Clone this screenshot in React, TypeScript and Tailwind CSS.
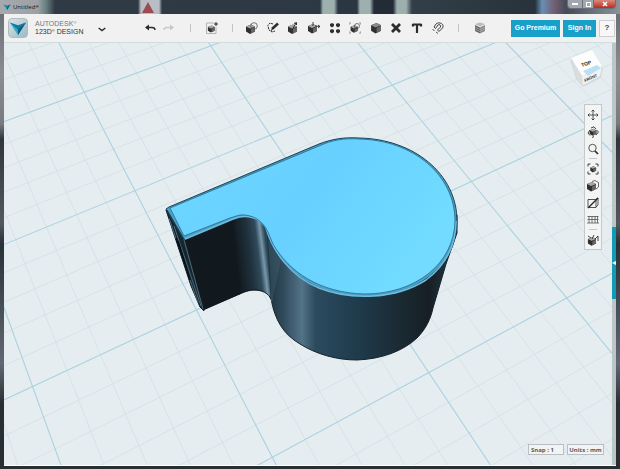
import type { ReactNode } from "react";

type Pt = [number, number];

// Ground plane: one square of two major cells on each side, seen in perspective.
const Q: Pt[] = [[135, 190.7], [392.3, 85], [566.7, 298], [272.3, 457.3]];

function project(u: number, v: number): Pt {
  const [p0, p1, p2, p3] = Q;
  const s = u / 2;
  const t = (v - 1) / 2;
  const dx1 = p1[0] - p2[0], dx2 = p3[0] - p2[0];
  const dy1 = p1[1] - p2[1], dy2 = p3[1] - p2[1];
  const sx = p0[0] - p1[0] + p2[0] - p3[0];
  const sy = p0[1] - p1[1] + p2[1] - p3[1];
  const det = dx1 * dy2 - dx2 * dy1;
  const g = (sx * dy2 - dx2 * sy) / det;
  const h = (dx1 * sy - sx * dy1) / det;
  const w = g * s + h * t + 1;
  return [
    ((p1[0] - p0[0] + g * p1[0]) * s + (p3[0] - p0[0] + h * p3[0]) * t + p0[0]) / w,
    ((p1[1] - p0[1] + g * p1[1]) * s + (p3[1] - p0[1] + h * p3[1]) * t + p0[1]) / w,
  ];
}

function GridLines() {
  const minor: string[] = [];
  const major: string[] = [];
  for (let i = -15; i <= 25; i++) {
    const k = i / 5;
    const [a, b] = [project(k, -1.6), project(k, 5)];
    const [c, d] = [project(-2.4, k), project(5, k)];
    const out = i % 5 === 0 ? major : minor;
    out.push(`M${a}L${b}`);
    if (k >= -1.6) out.push(`M${c}L${d}`);
  }
  return (
    <g fill="none">
      <path d={minor.join("")} stroke="#d3dfe3" strokeWidth="0.8" />
      <path d={major.join("")} stroke="#abd2e1" strokeWidth="1.1" />
    </g>
  );
}

function Scene() {
  return (
    <svg className="absolute inset-0 h-full w-full" viewBox="4 43 608 422" preserveAspectRatio="xMidYMid slice" role="img" aria-label="Solid model on the work plane">
      <defs>
        <linearGradient id="side" gradientUnits="userSpaceOnUse" x1="268" y1="0" x2="457" y2="0">
          <stop offset="0" stopColor="#20323e" />
          <stop offset="0.08" stopColor="#304a5b" />
          <stop offset="0.18" stopColor="#547387" />
          <stop offset="0.25" stopColor="#2d4b5e" />
          <stop offset="0.42" stopColor="#213f51" />
          <stop offset="0.66" stopColor="#1b2d37" />
          <stop offset="0.85" stopColor="#161f24" />
          <stop offset="1" stopColor="#253d4a" />
        </linearGradient>
        <linearGradient id="bend" gradientUnits="userSpaceOnUse" x1="232" y1="225" x2="273" y2="220">
          <stop offset="0" stopColor="#12191f" />
          <stop offset="0.35" stopColor="#20323e" />
          <stop offset="0.55" stopColor="#304b5c" />
          <stop offset="0.66" stopColor="#7898aa" />
          <stop offset="0.76" stopColor="#2c4758" />
          <stop offset="1" stopColor="#374f5d" />
        </linearGradient>
        <linearGradient id="face" x1="0" y1="0" x2="1" y2="0.4">
          <stop offset="0" stopColor="#6ed6ff" />
          <stop offset="0.55" stopColor="#67d0ff" />
          <stop offset="1" stopColor="#72dbff" />
        </linearGradient>
      </defs>
      <rect x="-400" y="-400" width="1600" height="1400" fill="#e5edf0" />
      <GridLines />
      <path d="M267 228L271 299C275 320 283 334 300 344C316 354 336 360 357 360C382 359 403 351 417 338C426 329 431 318 433 308L446 264L457 233V215Z" fill="url(#side)" stroke="#14222b" strokeWidth="1" />
      <path d="M230 219L238 295C246 291 253 289 260 291C267 292 270 296 272 303L283 250L267 222L248 214Z" fill="url(#bend)" />
      <path d="M184 237L233 218L240 294L203 310Z" fill="#11191f" />
      <path d="M166 210L184 237L204 311L200 307L191 286Z" fill="#17252e" stroke="#14212a" strokeWidth="1" />
      <path d="M169 218L198 303M174 226L201 306M184 240L203 309" fill="none" stroke="#577b8c" strokeWidth="0.8" />
      <path d="M176 238L189 276M178 241L190 280" fill="none" stroke="#061015" strokeWidth="1.6" />
      <path d="M203 310L242 293C253 288 266 289 271 299" fill="none" stroke="#0b151b" strokeWidth="1" />
      <path d="M267 228L271 299" fill="none" stroke="#172b37" strokeWidth="0.7" />
      <path d="M166 209L169 207L319 144C332 139 344 137 359 138C414 139 457 174 457 221C457 267 415 297 364 297C318 296 283 272 270 241L266 228C262 220 252 215 242 217C238 218 235 219 232 220L184 240Z" fill="#4d9fc3" stroke="#194256" strokeWidth="1" strokeLinejoin="round" />
      <path d="M185 239L233 219C246 214 260 217 266 228C273 252 291 277 319 288C352 301 396 299 426 280C446 265 456 245 456 221" fill="none" stroke="#6bbde2" strokeWidth="1.500" />
      <path d="M170 208L319 146C332 140 344 138 359 139C413 140 455 175 455 221C454 265 414 294 365 294C320 293 289 272 273 244L268 232C263 221 253 214 240 215C236 216 233 217 230 218L184 236Z" fill="url(#face)" stroke="#286b8b" strokeWidth="0.8" />
      <path d="M167 210L184 239" stroke="#183b4b" strokeWidth="1" />
      <g>
        <path d="M570 60L591 51L603 68L601 78L583 87L576 79Z" fill="#c8ced2" opacity="0.6" />
        <path d="M571 58L592 50L602 66L582 76Z" fill="#fdfdfd" />
        <path d="M571 58L582 76L583 85L577 79Z" fill="#dadde0" />
        <path d="M582 76L602 66L600 76L583 85Z" fill="#f2f2f2" />
        <path d="M583 71L597 65L601 68L588 76Z" fill="#b9e0f3" />
        <text x="582" y="67" transform="rotate(-20 582 67)" fontFamily="Liberation Sans, sans-serif" fontWeight="bold" fontSize="5" fill="#252525">TOP</text>
        <text x="585" y="82" transform="rotate(-24 585 82)" fontFamily="Liberation Sans, sans-serif" fontWeight="bold" fontSize="4" fill="#333">FRONT</text>
      </g>
    </svg>
  );
}

function Icon({ children, className = "size-3" }: { children: ReactNode; className?: string }) {
  return (
    <svg viewBox="0 0 12 12" className={className} fill="none" stroke="#2c2c2c" strokeWidth="1" aria-hidden="true">
      {children}
    </svg>
  );
}

function Cube({ x = 0, y = 0, soft = false }: { x?: number; y?: number; soft?: boolean }) {
  return (
    <g transform={`translate(${x} ${y})`} stroke="none">
      <path d="M0 2L5 0L9 2V7L4 9.500L0 7Z" fill="#303030" />
      <path d="M0 2L5 0L9 2L4 4Z" fill={soft ? "#8a8a8a" : "#a8a8a8"} />
      <path d="M5 4.500L9 2.500V7L5 9Z" fill="#666" />
    </g>
  );
}

const icons = {
  insert: <><path d="M8 1H.5V11.500H10V5" stroke="#999" strokeWidth=".7" /><g transform="scale(.75)"><Cube x={2.5} y={4.5} /></g><path d="M10 0V4M8 2H12" /></>,
  primitives: <><Cube x={0} y={2.5} /><circle cx="8" cy="4" r="3.300" stroke="#555" strokeWidth=".8" /></>,
  sketch: <><path d="M6 2L3 1L.8 3.500L2 8L5 10L8 9" strokeDasharray="2 .7" /><path d="M5 7L11 1.500" strokeWidth="2.500" /><path d="M4 9L5.500 6.500" /></>,
  construct: <><Cube x={1} y={2.5} /><path d="M6 6L9 1M7 1.500L9.500 .5V3" /></>,
  modify: <><Cube x={0} y={2} /><path d="M5 4V0M7 4L12 4.500M10 3L12 4.500L10 6" strokeWidth=".9" /></>,
  pattern: <g fill="#303030" stroke="none"><path d="M1 2L3 1L5 2V4L3 5.500L1 4ZM7 2L9 1L11 2V4L9 5.500L7 4ZM1 8L3 7L5 8V10L3 11.500L1 10ZM7 8L9 7L11 8V10L9 11.500L7 10Z" /></g>,
  grouping: <><g transform="scale(.8)"><Cube x={2} y={4} /></g><circle cx="8" cy="4" r="2.500" strokeWidth=".6" /><path d="M0 3V1H2M10 1H12V3M0 9V11H2M10 11H12V9" stroke="#777" strokeWidth=".7" /></>,
  combine: <g transform="scale(1.1)"><Cube x={1} y={1} soft /></g>,
  erase: <path d="M2 2L10 10M10 2L2 10" strokeWidth="2.800" />,
  text: <path d="M1.500 2.500H10.500M6 2V11M2 2V4.500M10 2V4.500" strokeWidth="2.200" />,
  magnet: <><path d="M2 5L4 2C7-.8 13 2 10.500 6L7 9.500L5.500 8L8.500 5C9.500 3 7 2 6 3L3.500 6.500Z" strokeWidth=".9" /><path d="M.5 7L2.500 9M4 10L6 11.500" strokeWidth=".8" /></>,
  material: <g stroke="none"><path d="M1 2L6 4.500L11 2L6 .5Z" fill="#bbb" /><path d="M1 3L6 5.500V11.500L1 9Z" fill="#666" /><path d="M11 3L6 5.500V11.500L11 9Z" fill="#858585" /><path d="M1 5L6 7.500L11 5M1 7L6 9.500L11 7" fill="none" stroke="#ccc" strokeWidth=".5" /></g>,
  pan: <><path d="M6 1V11M1 6H11" strokeWidth=".8" /><path d="M4.500 2.500L6 1L7.500 2.500M4.500 9.500L6 11L7.500 9.500M2.500 4.500L1 6L2.500 7.500M9.500 4.500L11 6L9.500 7.500" strokeWidth=".8" /></>,
  orbit: <><g transform="scale(.75)"><Cube x={3.5} y={3.5} /></g><path d="M3 9.500L1 7L3 4M4 2L7 .8L9 3M9.500 4L11.500 6L9 9M7 10.500L5 11.500" strokeWidth=".9" /></>,
  zoom: <><circle cx="5.500" cy="5" r="3.700" strokeWidth=".8" /><path d="M8 8L11 11" strokeWidth="1.700" /></>,
  fit: <><g transform="scale(.65)"><Cube x={5} y={5} /></g><path d="M1 3.500V1H3.500M8.500 1H11V3.500M1 8.500V11H3.500M8.500 11H11V8.500" strokeWidth=".9" /></>,
  shading: <><Cube x={0} y={2} /><path d="M5 1.500L8 .5L11.500 2.500V7L9 9" strokeWidth=".7" /></>,
  hide: <><path d="M1 2.500H9V10.500H1ZM9 2L11 1V8L9 10" strokeWidth=".8" /><path d="M1 11L11 1" strokeWidth="1.500" /></>,
  gridToggle: <><path d="M.5 2.500H11.500M.5 5.500H11.500M0 9H12M2 2V9M5 2V9M8 2V9M10.500 2V9" stroke="#555" strokeWidth=".8" /></>,
  snap: <><g transform="scale(.9)"><Cube x={1} y={3.5} /></g><path d="M1 2L4 4M5 5L7 1M8 5L11 2V7" strokeWidth=".9" /></>,
};

type IconName = keyof typeof icons;

function ToolButton({ name, label }: { name: IconName; label: string }) {
  return (
    <button type="button" aria-label={label} className="flex h-[17px] min-w-0 flex-1 items-center justify-center">
      <Icon>{icons[name]}</Icon>
    </button>
  );
}

const tools: [IconName, string][] = [
  ["primitives", "Primitives"], ["sketch", "Sketch"], ["construct", "Construct"], ["modify", "Modify"], ["pattern", "Pattern"],
  ["grouping", "Grouping"], ["combine", "Combine"], ["erase", "Delete"], ["text", "Text"], ["magnet", "Snap"],
];

const navGroups: [IconName, string][][] = [
  [["pan", "Pan"], ["orbit", "Orbit"], ["zoom", "Zoom"]],
  [["fit", "Fit"], ["shading", "Shading"], ["hide", "Hide"], ["gridToggle", "Toggle grid"]],
  [["snap", "Snap options"]],
];

function Divider() {
  return <span className="h-2 w-px shrink-0 bg-[#c4c4c4]" />;
}

function Logo({ className }: { className: string }) {
  return (
    <svg viewBox="0 0 20 20" className={className} aria-hidden="true">
      <path d="M1 4L10 8V18Z" fill="#2fabc9" />
      <path d="M19 4L10 8V18Z" fill="#075a80" />
      <path d="M1 4L10 7L19 4L10 12Z" fill="#0f7ba2" />
    </svg>
  );
}

function TitleBar() {
  return (
    <div className="flex h-[14px] shrink-0 items-start bg-[linear-gradient(90deg,#a6a9ad_0,#9da1a5_38px,#668080_46px,#303a45_55px,#303a45_138px,#b9bdc5_141px,#b9bdc5_159px,#303a45_162px,#2c3844_320px,#9eb0ae_323px,#9eb0ae_334px,#2b3643_338px,#2b3643_357px,#9eb0ae_360px,#9eb0ae_370px,#232c36_374px,#232c36_393px,#9eb0ae_397px,#9eb0ae_406px,#333f48_412px,#27323a_535px,#6990b3_542px,#715d70_555px,#454c57_566px,#8d9498_100%)]">
      <div className="flex h-[13px] flex-1 items-center gap-[2px] pl-[3px]">
        <Logo className="size-2" />
        <span className="w-[126px] font-['Open_Sans','Noto_Sans',sans-serif] text-[6px] leading-[10px] text-[#181818]">Untitled*</span>
        <svg viewBox="0 0 14 12" className="h-3 w-[14px]" aria-hidden="true"><path d="M7 1L13 12H1Z" fill="#9b4b52" /></svg>
      </div>
      <div className="mr-1 flex h-[9px] overflow-hidden rounded-b-sm border border-t-0 border-[#68717a] text-white">
        <button type="button" aria-label="Minimize" className="flex w-[14px] items-center justify-center bg-[#a1a7ae]"><span className="h-[2px] w-[6px] bg-white" /></button>
        <button type="button" aria-label="Maximize" className="flex w-3 items-center justify-center border-x border-[#68717a] bg-[#a1a7ae]"><span className="size-[5px] border border-white" /></button>
        <button type="button" aria-label="Close" className="flex w-[21px] items-center justify-center bg-[linear-gradient(#d9897d,#b82c21)]"><Icon className="size-[6px]"><path d="M2 2L10 10M10 2L2 10" stroke="white" strokeWidth="3" /></Icon></button>
      </div>
    </div>
  );
}

function Toolbar() {
  return (
    <header className="flex h-7 shrink-0 items-center bg-[#f1f1f1] pr-px">
      <div className="flex w-[137px] items-center pl-1">
        <span className="flex size-5 items-center justify-center rounded-sm border border-[#aebcc2] bg-[linear-gradient(135deg,#dce2e4,#9bb9c4)]"><Logo className="size-[18px]" /></span>
        <span className="ml-[7px] flex w-[57px] flex-col whitespace-nowrap font-['Liberation_Sans',sans-serif] text-[7px] leading-[8px] text-[#333]">
          <span className="flex text-[#777]">AUTODESK<span className="text-[4px] leading-[6px]">®</span></span>
          <span className="flex">123D<span className="text-[4px] leading-[6px]">®</span>&nbsp;DESIGN</span>
        </span>
        <button type="button" aria-label="Application menu" className="flex w-5 justify-center"><Icon className="size-[10px]"><path d="M2 6L6 9L10 6" strokeWidth="1.800" /></Icon></button>
      </div>
      <button type="button" aria-label="Undo" className="flex w-[18px] justify-center"><Icon><path d="M2 5.500H8Q11 5.500 11 8" strokeWidth="1.400" /><path d="M5 2.500V8.500L1 5.500Z" fill="#2c2c2c" stroke="none" /></Icon></button>
      <button type="button" aria-label="Redo" className="flex w-5 justify-center"><Icon><path d="M10 5.500H4Q1 5.500 1 8" stroke="#c9c9c9" strokeWidth="1.400" /><path d="M7 2.500V8.500L11 5.500Z" fill="#c9c9c9" stroke="none" /></Icon></button>
      <div className="flex w-[63px] items-center pl-[11px] pr-[9px]"><Divider /><ToolButton name="insert" label="Insert" /><Divider /></div>
      <div className="flex w-[206px]">{tools.map(([name, label]) => <ToolButton key={name} name={name} label={label} />)}</div>
      <div className="flex w-[52px] items-center pl-[10px]"><Divider /><ToolButton name="material" label="Material" /></div>
      <div className="ml-auto flex items-center gap-[3px] font-['Liberation_Sans',sans-serif] text-[7px] font-bold leading-[10px] text-white">
        <button type="button" className="h-[17px] w-[49px] whitespace-nowrap bg-[#18a0c9]">Go Premium</button>
        <button type="button" className="h-[17px] w-[33px] whitespace-nowrap bg-[#18a0c9]">Sign In</button>
        <button type="button" aria-label="Help" className="h-[17px] w-4 border border-[#cfcfcf] bg-[#f7f7f7] text-[8px] text-[#444]">?</button>
      </div>
    </header>
  );
}

export default function App() {
  return (
    <div className="flex min-h-screen flex-col bg-[#333a40] font-['Noto_Sans',sans-serif]">
      <TitleBar />
      <div className="flex flex-1 flex-col bg-[linear-gradient(#6b7075_0,#8b8e91_60px,#777b7f_110px,#30363b_125px,#52585d_210px,#273137_230px,#626873_350px,#292e33_390px)] pb-[3px] pl-1 pr-1">
        <Toolbar />
        <main className="flex flex-1 border-b border-white border-t border-t-[#d2dcdc]">
          <div className="relative flex flex-1 flex-col items-end justify-between overflow-hidden bg-[#e5edf0]">
            <Scene />
            <nav aria-label="View" className="relative mr-[10px] mt-[61px] w-[18px] border border-[#c4cacc] bg-[#f3f5f5] py-px">
              {navGroups.map((group, i) => (
                <div key={i} className="flex flex-col">
                  {i > 0 && <span className="mx-auto my-[1px] h-px w-2 bg-[#c4c8ca]" />}
                  {group.map(([name, label]) => <div key={name} className="flex"><ToolButton name={name} label={label} /></div>)}
                </div>
              ))}
            </nav>
            <div className="relative mb-[10px] mr-2 flex gap-[3px] whitespace-nowrap font-['Open_Sans','Noto_Sans',sans-serif] text-[6px] font-bold leading-[8px] text-[#5a5a5a]">
              <button type="button" className="h-[11px] w-9 border border-[#b9bfc2] bg-[#f1f4f5] pl-[2px] text-left">Snap : 1</button>
              <button type="button" className="h-[11px] w-[37px] border border-[#b9bfc2] bg-[#f1f4f5] text-center">Units : mm</button>
            </div>
          </div>
          <div className="w-1 shrink-0 bg-[#bdc6c7] pt-[184px]">
            <button type="button" aria-label="Open parts library" className="flex h-[72px] w-1 items-center bg-[#149ab5]"><Icon className="h-[6px] w-1"><path d="M12 0L0 6L12 12Z" fill="white" stroke="none" /></Icon></button>
          </div>
        </main>
      </div>
    </div>
  );
}
